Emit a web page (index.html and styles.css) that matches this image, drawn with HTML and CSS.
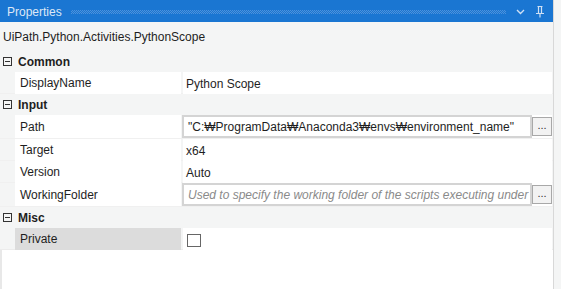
FILE: index.html
```html
<!DOCTYPE html>
<html>
<head>
<meta charset="utf-8">
<link rel="stylesheet" href="styles.css">
</head>
<body>
<div class="window">
  <div class="main">
    <div class="titlebar">
      <span class="title">Properties</span>
      <span class="dots"></span>
      <svg class="chev" width="9" height="6" viewBox="0 0 9 6"><path d="M1 1 L4.5 4.5 L8 1" fill="none" stroke="#cfe0f4" stroke-width="1.4"/></svg>
      <svg class="pin" width="10" height="13" viewBox="0 0 10 13"><path d="M2.5 1.5 H7.5 M3.5 1.5 V8 M6.5 1.5 V8 M1 8.5 H9 M5 8.5 V12.5" fill="none" stroke="#cfe0f4" stroke-width="1.2"/></svg>
    </div>
    <div class="typename">UiPath.Python.Activities.PythonScope</div>

    <div class="cat"><span class="exp"></span><span class="catname">Common</span></div>
    <div class="row">
      <div class="name">DisplayName</div>
      <div class="val">Python Scope</div>
    </div>

    <div class="cat"><span class="exp"></span><span class="catname">Input</span></div>
    <div class="row tall">
      <div class="name">Path</div>
      <div class="val edit">
        <div class="box">"C:₩ProgramData₩Anaconda3₩envs₩environment_name"</div>
        <div class="btn">...</div>
      </div>
    </div>
    <div class="row">
      <div class="name">Target</div>
      <div class="val">x64</div>
    </div>
    <div class="row">
      <div class="name">Version</div>
      <div class="val">Auto</div>
    </div>
    <div class="row tall">
      <div class="name">WorkingFolder</div>
      <div class="val edit">
        <div class="box ph">Used to specify the working folder of the scripts executing under the Python Scope</div>
        <div class="btn">...</div>
      </div>
    </div>

    <div class="cat"><span class="exp"></span><span class="catname">Misc</span></div>
    <div class="row last">
      <div class="name sel">Private</div>
      <div class="val"><span class="check"></span></div>
    </div>
    <div class="rest"></div>
  </div>
  <div class="scroll"></div>
</div>
</body>
</html>
```
FILE: styles.css
```css
* { box-sizing: border-box; }
html, body { margin: 0; padding: 0; background: #ffffff; }
body {
  font-family: "Liberation Sans", "Noto Sans CJK KR", sans-serif;
  font-size: 12px;
  color: #1e1e1e;
}
.window {
  display: flex;
  width: 561px;
  height: 289px;
  overflow: hidden;
}
.main {
  width: 554px;
  display: flex;
  flex-direction: column;
  background: #f4f5f5;
  border-right: 1px solid #d8d8d8;
}
.scroll {
  width: 7px;
  background: #f4f5f5;
}
.titlebar {
  height: 22px;
  background: #1a76d2;
  display: flex;
  align-items: center;
  padding-left: 7px;
  padding-right: 8px;
  flex-shrink: 0;
}
.title {
  color: #dde8f6;
  font-size: 12px;
  line-height: 22px;
  padding-top: 1px;
}
.dots {
  flex: 1;
  height: 4px;
  margin: 1px 10px 0 9px;
  background: repeating-conic-gradient(#4d92dc 0 25%, transparent 0 50%) 0 0 / 2px 2px;
}
.chev { margin-right: 10px; margin-top: 2px; }
.pin { margin-top: 0; }
.typename {
  height: 29px;
  line-height: 28px;
  padding-top: 1px;
  padding-left: 3px;
  flex-shrink: 0;
}
.cat {
  height: 21px;
  display: flex;
  align-items: center;
  flex-shrink: 0;
}
.exp {
  width: 9px;
  height: 9px;
  border: 1px solid #333;
  margin-left: 3px;
  margin-right: 6px;
  position: relative;
}
.exp::after {
  content: "";
  position: absolute;
  left: 1px;
  right: 1px;
  top: 3px;
  height: 1px;
  background: #333;
}
.catname { font-weight: bold; padding-top: 1px; }
.row {
  display: grid;
  grid-template-columns: 166px 369px;
  column-gap: 2px;
  padding-left: 15px;
  height: 22px;
  border-bottom: 1px solid #f0f0f0;
  flex-shrink: 0;
}
.row.tall { height: 24px; }
.row.last { border-bottom-color: #ececec; }
.name {
  background: #ffffff;
  padding-left: 5px;
  padding-top: 1px;
  line-height: 21px;
}
.row.tall .name { padding-top: 2px; }
.name.sel { background: #dcdcdc; }
.val {
  background: #ffffff;
  padding-left: 3px;
  padding-top: 1px;
  line-height: 20px;
  display: flex;
  align-items: center;
}
.val.edit {
  padding-left: 0;
  padding-top: 0;
  margin-left: -1px;
  align-items: stretch;
}
.box {
  width: 350px;
  height: 23px;
  border: 2px solid #d4d4d4;
  padding-left: 4px;
  padding-top: 1px;
  line-height: 18px;
  white-space: nowrap;
  overflow: hidden;
  background: #fff;
}
.box.ph { font-style: italic; color: #8a8a8a; }
.btn {
  width: 20px;
  height: 19px;
  margin-top: 2px;
  border: 1px solid #a8a8a8;
  background: #f2f2f2;
  font-size: 11px;
  line-height: 14px;
  text-align: center;
  color: #333;
}
.check {
  width: 14px;
  height: 13px;
  border: 1px solid #666;
  margin-left: 1px;
  margin-top: 1px;
}
.rest {
  flex: 1;
  background: #ffffff;
  border-left: 2px solid #e8e8e8;
}
```
